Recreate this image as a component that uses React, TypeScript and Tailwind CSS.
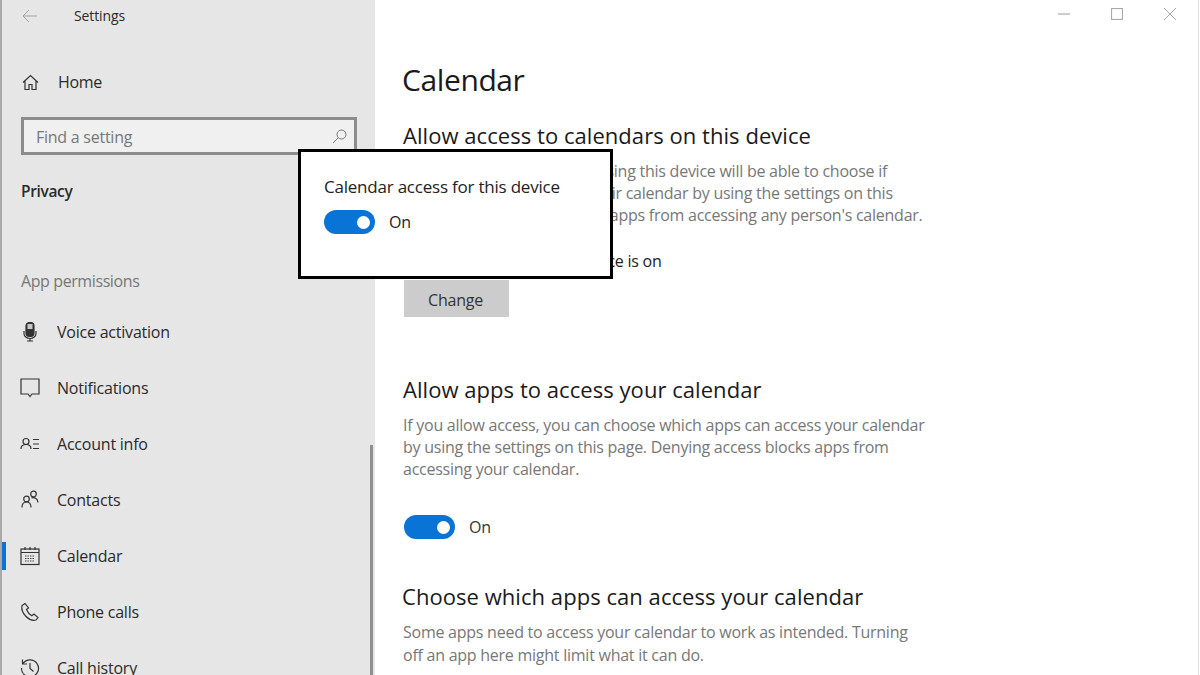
const font = { fontFamily: "'Open Sans', 'Noto Sans', sans-serif" };

function Toggle() {
  return (
    <div className="flex h-[24px] w-[51px] items-center justify-end rounded-full bg-[#0a74d6] pr-[5px]">
      <div className="h-[13px] w-[13px] rounded-full bg-white" />
    </div>
  );
}

const icon = {
  width: 20,
  height: 20,
  viewBox: "0 0 20 20",
  fill: "none",
  stroke: "#333",
  strokeWidth: 1.2,
};

const navItems = [
  {
    label: "Voice activation",
    icon: (
      <svg {...icon}>
        <rect x="6" y="0.500" width="8" height="14" rx="3.500" fill="#333" stroke="#333" />
        <rect x="7.500" y="2" width="5" height="5" fill="#c8c8c8" stroke="none" />
        <path d="M4 9v2.500a6 5 0 0 0 12 0V9M10 16.500v2.500M7 19h6" />
      </svg>
    ),
  },
  {
    label: "Notifications",
    icon: (
      <svg {...icon}>
        <path d="M1 1h18v15h-7l-2 2.500L8 16H1z" />
      </svg>
    ),
  },
  {
    label: "Account info",
    icon: (
      <svg {...icon}>
        <circle cx="6" cy="7.500" r="3" />
        <path d="M1 15c0-3 2-4.500 5-4.500s5 1.500 5 4.500M13 5.500h6M13 10h6M13 14.500h6" />
      </svg>
    ),
  },
  {
    label: "Contacts",
    icon: (
      <svg {...icon}>
        <circle cx="6.500" cy="9" r="2.800" />
        <path d="M2 17.500c0-3.500 2-5.500 4.500-5.500s4.500 2 4.500 5.500" />
        <circle cx="13.500" cy="4" r="2.800" />
        <path d="M11.500 7.800c3-.8 6 .7 6.500 4.700" />
      </svg>
    ),
  },
  {
    label: "Calendar",
    active: true,
    icon: (
      <svg {...icon}>
        <rect x="1" y="3" width="18" height="15.500" />
        <path d="M1 6.500h18M5 1v3M10 1v3M15 1v3" />
        <path d="M5 10h10M5 12.500h10M5 15h10" strokeDasharray="1.400 1.100" />
      </svg>
    ),
  },
  {
    label: "Phone calls",
    icon: (
      <svg {...icon}>
        <path d="M5 1.500 2 3.500c-.8 4 1 8 4 11s6 4.500 10 3.500l2-2.500-4-3.500-2.200 1.700C9.500 12.500 7.500 10 6.500 7.500L8.500 6z" />
      </svg>
    ),
  },
  {
    label: "Call history",
    icon: (
      <svg {...icon}>
        <path d="M3 5.500a8.500 8.500 0 1 1-1.500 4.500M2.500 1.500v4.500H7M10 5v5.500l3.500 3" />
      </svg>
    ),
  },
];

export default function App() {
  return (
    <div className="relative flex h-[675px] w-[1200px] overflow-hidden bg-white" style={font}>
      {/* sidebar */}
      <div className="flex w-[375px] shrink-0 flex-col border-l-[2px] border-[#a9a9a9] bg-[#e6e6e6] pl-[18px] pr-[18px] text-[#2b2b2b]">
        <div className="flex h-[31px] shrink-0 items-center gap-[36px] pl-[2px]">
          <svg width="16" height="14" viewBox="0 0 16 14" fill="none" stroke="#a3a3a3" strokeWidth="1">
            <path d="M15 7H1M7 1 1 7l6 6" />
          </svg>
          <span className="text-[14px] leading-none tracking-[-0.1px]">Settings</span>
        </div>
        <div className="mt-[26px] flex h-[50px] shrink-0 items-center gap-[19px] pl-[2px] text-[16px] tracking-[-0.35px]">
          <svg width="17" height="17" viewBox="0 0 17 17" fill="none" stroke="#333" strokeWidth="1.2">
            <path d="M1 8.500 8.500 1.500 16 8.500M3 7v8.500h4v-5h3v5h4V7" />
          </svg>
          <span>Home</span>
        </div>
        <div className="mt-[10px] ml-[1px] flex h-[38px] shrink-0 items-center justify-between border-[3px] border-[#8c8c8c] bg-[#f0f0f0] pl-[12px] pr-[7px] text-[16px] tracking-[-0.25px] text-[#777]">
          <span className="pt-[1px]">Find a setting</span>
          <svg width="15" height="15" viewBox="0 0 15 15" fill="none" stroke="#777" strokeWidth="1">
            <circle cx="9.500" cy="5.500" r="4.500" />
            <path d="M6.200 8.800 1 14" />
          </svg>
        </div>
        <div className="mt-[25px] ml-[1px] shrink-0 text-[15.5px] font-semibold leading-[22px] tracking-[-0.35px]">Privacy</div>
        <div className="mt-[68px] ml-[1px] shrink-0 text-[16px] leading-[22px] tracking-[-0.4px] text-[#777]">App permissions</div>
        <div className="mt-[12px] flex shrink-0 flex-col">
          {navItems.map((item) => (
            <div
              key={item.label}
              className="relative flex h-[56px] shrink-0 items-center gap-[17px] text-[16px] tracking-[-0.22px]"
            >
              {item.active && <div className="absolute left-[-18px] top-[14px] h-[28px] w-[4px] bg-[#0a74d6]" />}
              {item.icon}
              <span>{item.label}</span>
            </div>
          ))}
        </div>
      </div>

      {/* sidebar scrollbar */}
      <div className="absolute left-[370px] top-[445px] h-[230px] w-[3px] bg-[#8f8f8f]" />

      {/* content */}
      <div className="flex-1 pl-[28px] pt-[60px] text-[16px] leading-[22px] tracking-[-0.25px] text-[#777]">
        <h1 className="-ml-[1px] text-[30px] leading-[40px] tracking-[-0.4px] text-[#1a1a1a]">Calendar</h1>
        <h2 className="mt-[20px] text-[22px] leading-[30px] tracking-[0.05px] text-[#1a1a1a]">
          Allow access to calendars on this device
        </h2>
        <p className="mt-[10px] whitespace-nowrap">
          If you allow access, people using this device will be able to choose if
          <br />
          their apps have access to their calendar by using the settings on this
          <br />
          page. Denying access blocks apps from accessing any person's calendar.
        </p>
        <p className="mt-[24px] text-[#222]">Calendar access for this device is on</p>
        <button className="mt-[8px] ml-[1px] h-[37px] w-[105px] bg-[#cccccc] pt-[2px] pr-[2px] text-[#333]">Change</button>
        <h2 className="mt-[57px] text-[22px] leading-[30px] tracking-[0.05px] text-[#1a1a1a]">
          Allow apps to access your calendar
        </h2>
        <p className="mt-[10px] whitespace-nowrap">
          If you allow access, you can choose which apps can access your calendar
          <br />
          by using the settings on this page. Denying access blocks apps from
          <br />
          accessing your calendar.
        </p>
        <div className="mt-[35px] ml-[1px] flex items-center gap-[14px] text-[#333]">
          <Toggle />
          <span>On</span>
        </div>
        <h2 className="mt-[42px] -ml-[1px] text-[22px] leading-[30px] tracking-[0.05px] text-[#1a1a1a]">
          Choose which apps can access your calendar
        </h2>
        <p className="mt-[10px] whitespace-nowrap leading-[23px]">
          Some apps need to access your calendar to work as intended. Turning
          <br />
          off an app here might limit what it can do.
        </p>
      </div>

      {/* window controls */}
      <div className="absolute right-[24px] top-[8px] flex items-center gap-[41px]">
        <svg width="12" height="12" viewBox="0 0 12 12" stroke="#999" fill="none">
          <path d="M0 6h12" />
        </svg>
        <svg width="12" height="12" viewBox="0 0 12 12" stroke="#aaa" fill="none" strokeWidth="1.2">
          <rect x="0.500" y="0.500" width="11" height="11" />
        </svg>
        <svg width="12" height="12" viewBox="0 0 12 12" stroke="#aaa" fill="none">
          <path d="M0 0l12 12M12 0 0 12" />
        </svg>
      </div>
      <div className="absolute right-[1px] top-0 h-full w-[1px] bg-[#e0e0e0]" />

      {/* highlighted popup */}
      <div className="absolute left-[298px] top-[149px] h-[130px] w-[315px] border-[3px] border-black bg-white pl-[23px] pt-[24px] text-[17px] leading-[22px] tracking-[-0.22px] text-[#222]">
        <div>Calendar access for this device</div>
        <div className="mt-[12px] flex items-center gap-[14px] text-[16px]">
          <Toggle />
          <span>On</span>
        </div>
      </div>
    </div>
  );
}
